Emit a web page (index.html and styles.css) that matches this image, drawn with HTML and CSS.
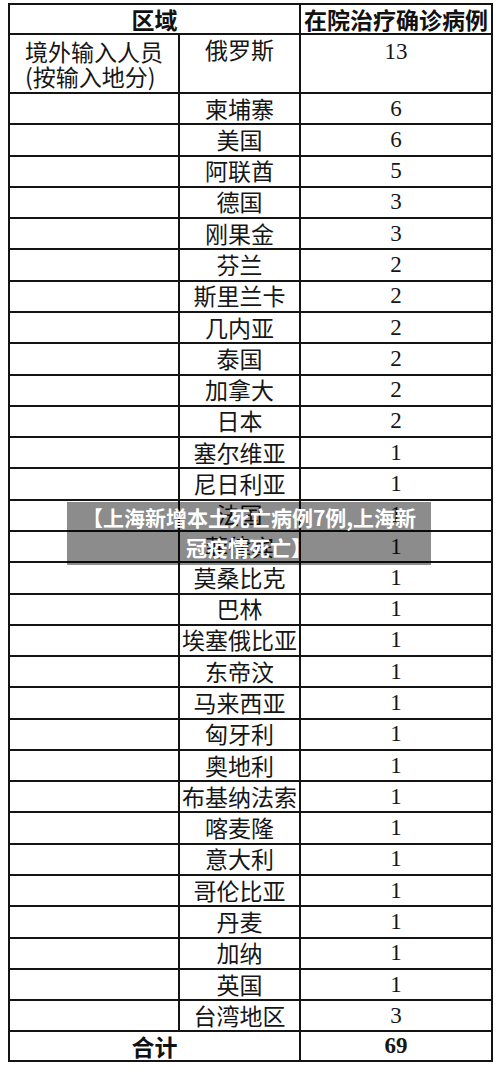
FILE: index.html
```html
<!DOCTYPE html>
<html lang="zh-CN">
<head>
<meta charset="utf-8">
<title>上海新增本土死亡病例</title>
<link rel="stylesheet" href="styles.css">
</head>
<body>
<div class="page">
  <div class="sheet">
    <div class="cell head span2">区域</div>
    <div class="cell head">在院治疗确诊病例</div>

    <div class="cell region"><span class="region-text">境外输入人员<br>(按输入地分)</span></div>
    <div class="cell name top">俄罗斯</div>
    <div class="cell num top num-first">13</div>

    <div class="cell"></div><div class="cell name">柬埔寨</div><div class="cell num">6</div>
    <div class="cell"></div><div class="cell name">美国</div><div class="cell num">6</div>
    <div class="cell"></div><div class="cell name">阿联酋</div><div class="cell num">5</div>
    <div class="cell"></div><div class="cell name">德国</div><div class="cell num">3</div>
    <div class="cell"></div><div class="cell name">刚果金</div><div class="cell num">3</div>
    <div class="cell"></div><div class="cell name">芬兰</div><div class="cell num">2</div>
    <div class="cell"></div><div class="cell name">斯里兰卡</div><div class="cell num">2</div>
    <div class="cell"></div><div class="cell name">几内亚</div><div class="cell num">2</div>
    <div class="cell"></div><div class="cell name">泰国</div><div class="cell num">2</div>
    <div class="cell"></div><div class="cell name">加拿大</div><div class="cell num">2</div>
    <div class="cell"></div><div class="cell name">日本</div><div class="cell num">2</div>
    <div class="cell"></div><div class="cell name">塞尔维亚</div><div class="cell num">1</div>
    <div class="cell"></div><div class="cell name">尼日利亚</div><div class="cell num">1</div>
    <div class="cell"></div><div class="cell name">法国</div><div class="cell num">1</div>
    <div class="cell"></div><div class="cell name">菲律宾</div><div class="cell num">1</div>
    <div class="cell"></div><div class="cell name">莫桑比克</div><div class="cell num">1</div>
    <div class="cell"></div><div class="cell name">巴林</div><div class="cell num">1</div>
    <div class="cell"></div><div class="cell name">埃塞俄比亚</div><div class="cell num">1</div>
    <div class="cell"></div><div class="cell name">东帝汶</div><div class="cell num">1</div>
    <div class="cell"></div><div class="cell name">马来西亚</div><div class="cell num">1</div>
    <div class="cell"></div><div class="cell name">匈牙利</div><div class="cell num">1</div>
    <div class="cell"></div><div class="cell name">奥地利</div><div class="cell num">1</div>
    <div class="cell"></div><div class="cell name">布基纳法索</div><div class="cell num">1</div>
    <div class="cell"></div><div class="cell name">喀麦隆</div><div class="cell num">1</div>
    <div class="cell"></div><div class="cell name">意大利</div><div class="cell num">1</div>
    <div class="cell"></div><div class="cell name">哥伦比亚</div><div class="cell num">1</div>
    <div class="cell"></div><div class="cell name">丹麦</div><div class="cell num">1</div>
    <div class="cell"></div><div class="cell name">加纳</div><div class="cell num">1</div>
    <div class="cell"></div><div class="cell name">英国</div><div class="cell num">1</div>
    <div class="cell"></div><div class="cell name">台湾地区</div><div class="cell num">3</div>

    <div class="cell head span2">合计</div>
    <div class="cell num bold">69</div>
  </div>

  <div class="caption">【上海新增本土死亡病例7例,上海新<br>冠疫情死亡】</div>
</div>
</body>
</html>
```

FILE: styles.css
```css
html, body {
  margin: 0;
  padding: 0;
  background: #ffffff;
}

.page {
  position: relative;
  padding: 3px 7px 0 8px;
  width: 500px;
  height: 1069px;
  box-sizing: border-box;
  font-family: "Noto Sans CJK SC", "Noto Sans", sans-serif;
  color: #161616;
}

.sheet {
  display: grid;
  grid-template-columns: 168px 119px 190px;
  grid-template-rows: 28px 57px repeat(30, 29.29px) 28px;
  gap: 2px;
  padding: 2px;
  background: #141414;
  width: max-content;
}

.cell {
  background: #ffffff;
  display: flex;
  align-items: center;
  justify-content: center;
  font-size: 23px;
  line-height: 24px;
  white-space: nowrap;
}

.name {
  padding-bottom: 2px;
}

.span2 {
  grid-column: span 2;
}

.head {
  font-weight: 700;
  color: #111;
  padding-bottom: 1px;
}

.region {
  line-height: 25px;
}

.region-text {
  display: inline-block;
  text-align: left;
}

.top {
  align-items: flex-start;
  padding-top: 2px;
  padding-bottom: 0;
}

.num {
  font-family: "Liberation Serif", "Times New Roman", serif;
}

.num-first {
  padding-top: 5px;
}

.bold {
  font-weight: 700;
}

.caption {
  position: absolute;
  left: 67px;
  top: 502px;
  width: 364px;
  height: 63px;
  box-sizing: border-box;
  padding: 0 0 3px;
  background: rgba(0, 0, 0, 0.45);
  color: #ffffff;
  font-family: "Noto Sans CJK SC", sans-serif;
  font-weight: 700;
  font-size: 21px;
  line-height: 30px;
  text-align: center;
  white-space: nowrap;
}
```
